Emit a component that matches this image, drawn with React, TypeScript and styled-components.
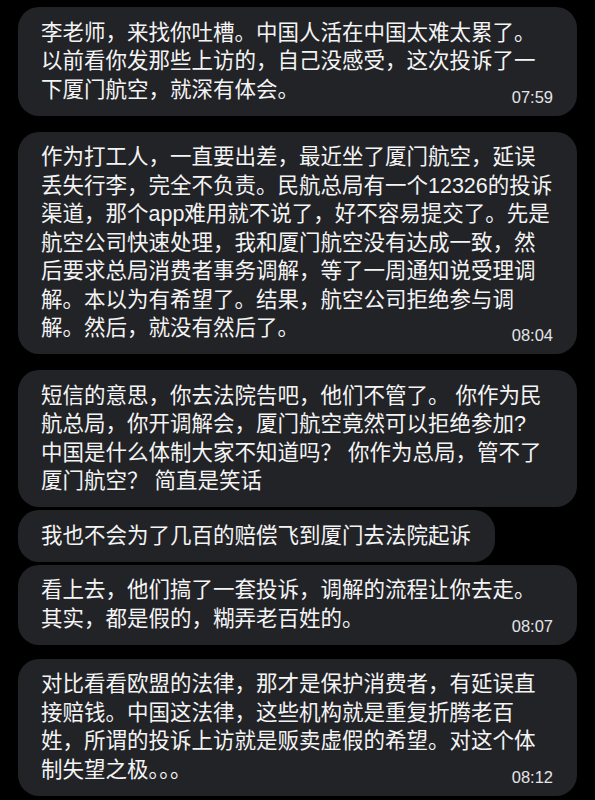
import styled, { createGlobalStyle } from 'styled-components'

const GlobalStyle = createGlobalStyle`
  html, body {
    margin: 0;
    padding: 0;
    background: #000;
  }
  body {
    font-family: "Liberation Sans", "Noto Sans CJK SC", sans-serif;
    -webkit-font-smoothing: antialiased;
  }
`

const Chat = styled.div`
  display: flex;
  flex-direction: column;
  align-items: stretch;
  padding: 7px 18px 0;
  width: 595px;
  height: 800px;
  box-sizing: border-box;
  overflow: hidden;
  background: #000;
`

const Bubble = styled.div<{ $gap: number; $compact?: boolean }>`
  align-self: ${(p) => (p.$compact ? 'flex-start' : 'stretch')};
  margin-top: ${(p) => p.$gap}px;
  padding: 11.5px 24px 11.5px 23px;
  background: #222327;
  border-radius: 21px;
  color: #f4f4f4;
  font-size: 21.5px;
  line-height: 28.5px;
`

const Line = styled.div`
  white-space: nowrap;
`

const Time = styled.span`
  float: right;
  margin: 14px 0 0 16px;
  font-size: 16.5px;
  line-height: 14px;
  color: #e4e4e6;
  white-space: nowrap;
`

type Message = {
  lines: string[]
  time?: string
  gap: number
  compact?: boolean
}

const messages: Message[] = [
  {
    lines: [
      '李老师，来找你吐槽。中国人活在中国太难太累了。',
      '以前看你发那些上访的，自己没感受，这次投诉了一',
      '下厦门航空，就深有体会。',
    ],
    time: '07:59',
    gap: 0,
  },
  {
    lines: [
      '作为打工人，一直要出差，最近坐了厦门航空，延误',
      '丢失行李，完全不负责。民航总局有一个12326的投诉',
      '渠道，那个app难用就不说了，好不容易提交了。先是',
      '航空公司快速处理，我和厦门航空没有达成一致，然',
      '后要求总局消费者事务调解，等了一周通知说受理调',
      '解。本以为有希望了。结果，航空公司拒绝参与调',
      '解。然后，就没有然后了。',
    ],
    time: '08:04',
    gap: 16,
  },
  {
    lines: [
      '短信的意思，你去法院告吧，他们不管了。 你作为民',
      '航总局，你开调解会，厦门航空竟然可以拒绝参加?',
      '中国是什么体制大家不知道吗？ 你作为总局，管不了',
      '厦门航空？ 简直是笑话',
    ],
    gap: 16,
  },
  {
    lines: ['我也不会为了几百的赔偿飞到厦门去法院起诉'],
    gap: 3,
    compact: true,
  },
  {
    lines: [
      '看上去，他们搞了一套投诉，调解的流程让你去走。',
      '其实，都是假的，糊弄老百姓的。',
    ],
    time: '08:07',
    gap: 3,
  },
  {
    lines: [
      '对比看看欧盟的法律，那才是保护消费者，有延误直',
      '接赔钱。中国这法律，这些机构就是重复折腾老百',
      '姓，所谓的投诉上访就是贩卖虚假的希望。对这个体',
      '制失望之极。。。',
    ],
    time: '08:12',
    gap: 14,
  },
]

export default function App() {
  return (
    <>
      <GlobalStyle />
      <Chat>
        {messages.map((m, i) => (
          <Bubble key={i} $gap={m.gap} $compact={m.compact}>
            {m.lines.map((line, j) => {
              const last = j === m.lines.length - 1
              return (
                <Line key={j}>
                  {last && m.time && <Time>{m.time}</Time>}
                  <span>{line}</span>
                </Line>
              )
            })}
          </Bubble>
        ))}
      </Chat>
    </>
  )
}
